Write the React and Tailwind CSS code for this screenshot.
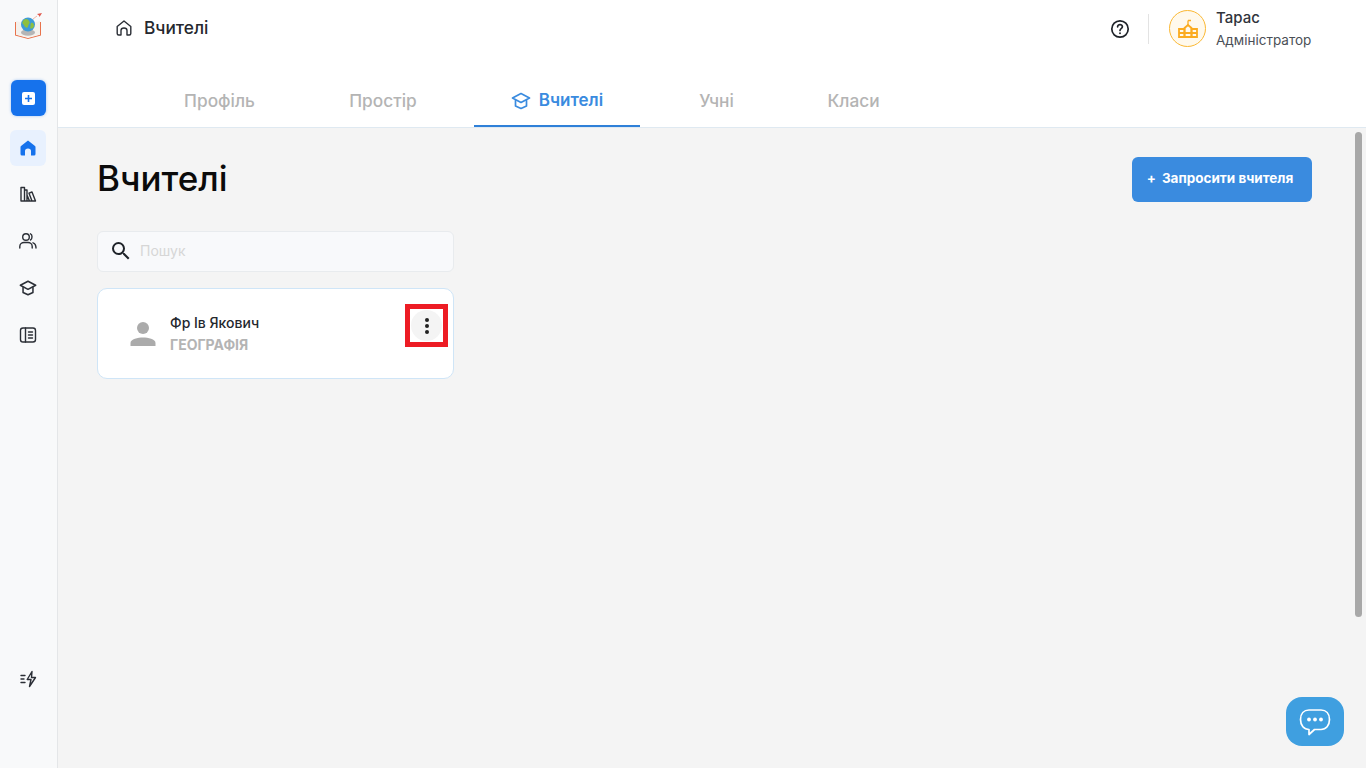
import React from "react";

const font = { fontFamily: "Inter, sans-serif" };

function Logo() {
  return (
    <svg width="28" height="28" viewBox="0 0 28 28" fill="none">
      <path d="M1 9 L1 22.5 L14 26 L27 22.5 L27 9 L26 9 L26 21.8 L14 25 L2 21.8 L2 9 Z" fill="#e8734c" />
      <path d="M2 8 L14 11 L26 8 L26 21.5 L14 24.5 L2 21.5 Z" fill="#f4f1ec" />
      <ellipse cx="14" cy="19.5" rx="7" ry="3.2" fill="#b5b5b5" />
      <circle cx="14" cy="11.5" r="7" fill="#3e9bd8" />
      <path d="M9 8 C11 5 14 6 15 8 C17 10 14 11 14 14 C12 16 10 13 10 12 C8 11 8 9 9 8 Z M17 10 C19 9 20 11 20 13 C19 16 17 16 16 15 C17 13 16 11 17 10 Z" fill="#8ebf3f" />
      <path d="M23 1 L28 0 L25.5 4 L25 2.5 Z" fill="#e0574a" />
      <path d="M19 6 L23 3" stroke="#f2b8a8" strokeWidth="1" />
    </svg>
  );
}

function NavIcon({ children, size = 20 }) {
  return (
    <svg width={size} height={size} viewBox="0 0 20 20" fill="none" stroke="#2b2f36" strokeWidth="1.4" strokeLinecap="round" strokeLinejoin="round">
      {children}
    </svg>
  );
}

function CapIcon({ color = "#2b2f36", size = 20 }) {
  return (
    <svg width={size} height={size} viewBox="0 0 20 20" fill="none" stroke={color} strokeWidth="1.7" strokeLinecap="round" strokeLinejoin="round">
      <path d="M10 2.5 L18.5 7 L10 11.5 L1.5 7 Z" />
      <path d="M4.5 9.5 V15 L10 17.5 L15.5 15 V9.5" />
    </svg>
  );
}

function Sidebar() {
  return (
    <aside className="w-[58px] h-full shrink-0 bg-[#f8f9fa] border-r border-[#e4e6e8] flex flex-col items-center pr-[1px]">
      <div className="mt-[13px] h-[28px]">
        <Logo />
      </div>
      <button className="mt-[39px] ml-[1px] w-[35px] h-[36px] rounded-[6px] bg-[#1672ec] flex items-center justify-center shadow-[0_0_3px_rgba(22,114,236,0.4)]">
        <span className="w-[13px] h-[13px] rounded-[2px] bg-white flex items-center justify-center">
          <svg width="9" height="9" viewBox="0 0 9 9"><path d="M4.5 1 V8 M1 4.5 H8" stroke="#1672ec" strokeWidth="1.6" /></svg>
        </span>
      </button>
      <div className="mt-[14px] w-[36px] h-[36px] rounded-[6px] bg-[#e8f1fe] flex items-center justify-center">
        <svg width="18" height="18" viewBox="0 0 18 18">
          <path fillRule="evenodd" d="M9 1.5 L16 7 Q16.5 7.5 16.5 8.2 V15 Q16.5 16.5 15 16.5 H12 V12 Q12 9.5 9 9.5 Q6 9.5 6 12 V16.5 H3 Q1.5 16.5 1.5 15 V8.2 Q1.5 7.5 2 7 Z" fill="#1672ec" />
        </svg>
      </div>
      <div className="mt-[18px] flex flex-col items-center gap-[27px]">
        <NavIcon>
          <path d="M3 17 V3.5 H6.5 V17 M6.5 17 V6 H9 V17 M3 17 H17.5 L14 8 L11 9.2 L14 17 M9 11 L11.5 17" />
        </NavIcon>
        <NavIcon>
          <circle cx="8" cy="6" r="3.3" />
          <path d="M1.8 17 V15.5 C1.8 13 4 11.5 6 11.5 H10 C12 11.5 14.2 13 14.2 15.5 V17" />
          <path d="M12.5 2.8 C14.5 3.5 14.5 8 12.5 9 M15 11.8 C17 12.5 18 14 18 17" />
        </NavIcon>
        <div className="w-[20px] h-[20px] flex items-center justify-center">
          <CapIcon size={18} />
        </div>
        <NavIcon>
          <rect x="2.5" y="3" width="15" height="14" rx="2.5" />
          <path d="M7.5 3 V17 M10.5 7 H14.5 M10.5 10 H14.5 M10.5 13 H14.5" />
        </NavIcon>
      </div>
      <div className="mt-auto mb-[79px] ml-[1px]">
        <NavIcon>
          <path d="M2 6.5 H6 M2 10 H5 M2 13.5 H6" />
          <path d="M13 2.5 L8.2 10.5 H12 L10.5 17.5 L16.5 8.5 H12.5 Z" />
        </NavIcon>
      </div>
    </aside>
  );
}

function Header() {
  const tabs = [
    { label: "Профіль", w: "w-[163px]" },
    { label: "Простір", w: "w-[173px] pr-[9px]" },
    { label: "Вчителі", w: "w-[166px]", active: true },
    { label: "Учні", w: "w-[153px]" },
    { label: "Класи", w: "w-[121px]" },
  ];
  return (
    <header className="h-[128px] shrink-0 bg-white border-b border-[#dfe9f1] flex flex-col">
      <div className="h-[58px] flex items-start justify-between pl-[57px] pr-[54px]">
        <div className="flex items-center gap-[11px] mt-[18px]">
          <svg width="18" height="18" viewBox="0 0 18 18" fill="none" stroke="#2b2f36" strokeWidth="1.4" strokeLinejoin="round">
            <path d="M9 2 L15.8 7.5 V14.5 Q15.8 16 14.3 16 H12 V11.5 Q12 9 9 9 Q6 9 6 11.5 V16 H3.7 Q2.2 16 2.2 14.5 V7.5 Z" />
          </svg>
          <span className="text-[17.3px] leading-[20px] font-medium text-[#25282e]">Вчителі</span>
        </div>
        <div className="flex items-center mt-[8px]">
          <svg width="20" height="20" viewBox="0 0 20 20" fill="none" stroke="#1f2329" strokeWidth="1.7" strokeLinecap="round">
            <circle cx="10" cy="10" r="8.2" />
            <path d="M7.6 7.8 C7.6 5 12.4 5 12.4 7.8 C12.4 9.6 10 9.6 10 11.4" />
            <path d="M10 14.2 V14.3" strokeWidth="1.9" />
          </svg>
          <div className="w-px h-[30px] bg-[#e3e3e3] ml-[18px] mr-[20px]" />
          <div className="w-[37px] h-[37px] rounded-full bg-[#fff9ec] border border-[#fbb833] flex items-center justify-center">
            <svg width="22" height="22" viewBox="0 0 22 22" fill="none" stroke="#fbab1f" strokeWidth="1.8">
              <path d="M11 7 V2.5 M11 2.5 H14" strokeWidth="1.3" />
              <path d="M7.5 10 L11 7 L14.5 10 V19 H7.5 Z" />
              <path d="M2 11 H7.5 V19 H2 Z M14.5 11 H20 V19 H14.5 Z M2 15 H20" />
            </svg>
          </div>
          <div className="ml-[10px] w-[96px]">
            <div className="text-[15px] leading-[20px] font-medium text-[#30343b]">Тарас</div>
            <div className="mt-[3px] text-[13.5px] leading-[18px] text-[#4b4f56]">Адміністратор</div>
          </div>
        </div>
      </div>
      <nav className="mt-auto flex pl-[80px]">
        {tabs.map((t) => (
          <div
            key={t.label}
            className={`${t.w} h-[53px] flex items-center justify-center gap-[8px] pt-[3px] font-medium ${
              t.active
                ? "text-[17px] text-[#3a8bdf] border-b-2 border-[#2f80d8] font-semibold"
                : "text-[17.3px] text-[#b4b4b4] border-b-2 border-transparent"
            }`}
          >
            {t.active && <CapIcon color="#3a8bdf" size={20} />}
            {t.label}
          </div>
        ))}
      </nav>
    </header>
  );
}

function TeacherCard() {
  return (
    <div className="relative mt-[16px] w-[357px] h-[91px] bg-white border border-[#cfe5f7] rounded-[10px] flex items-start">
      <svg className="ml-[31px] mt-[31px]" width="28" height="28" viewBox="0 0 28 28" fill="#ababab">
        <circle cx="14" cy="8" r="6" />
        <path d="M1.5 26 V23 C1.5 19 9 17.5 14 17.5 C19 17.5 26.5 19 26.5 23 V26 Z" />
      </svg>
      <div className="ml-[13px] mt-[24px]">
        <div className="text-[14px] leading-[20px] font-medium text-[#25282e]">Фр Ів Якович</div>
        <div className="mt-[2px] text-[14px] leading-[20px] font-bold text-[#b4b4b4]">ГЕОГРАФІЯ</div>
      </div>
      <div className="absolute left-[307px] top-[15px] w-[43px] h-[43px] border-[5px] border-[#ed1c24] flex items-center justify-center">
        <div className="w-[31px] h-[31px] rounded-full bg-[#f4f4f4] flex flex-col items-center justify-center gap-[2px]">
          <span className="w-[4px] h-[4px] rounded-full bg-[#222]" />
          <span className="w-[4px] h-[4px] rounded-full bg-[#222]" />
          <span className="w-[4px] h-[4px] rounded-full bg-[#222]" />
        </div>
      </div>
    </div>
  );
}

export default function App() {
  return (
    <div style={font} className="relative w-[1366px] h-[768px] overflow-hidden flex bg-[#f4f4f4]">
      <Sidebar />
      <div className="flex-1 flex flex-col min-w-0">
        <Header />
        <main className="relative flex-1 pl-[39px] pr-[54px]">
          <div className="flex items-start justify-between pt-[28px]">
            <h1 className="text-[35px] leading-[44px] font-medium text-[#0b0b0b]">Вчителі</h1>
            <button className="mt-[1px] w-[180px] h-[45px] pb-[2px] pr-[4px] rounded-[6px] bg-[#3a8bdf] text-white text-[13.5px] font-bold flex items-center justify-center gap-[6px]">
              <span>+</span>
              <span>Запросити вчителя</span>
            </button>
          </div>
          <div className="mt-[29px] w-[357px] h-[41px] rounded-[6px] bg-[#f8f9fb] border border-[#e8ebee] flex items-center pl-[11px] pb-[1px]">
            <svg width="24" height="24" viewBox="0 0 24 24" fill="#1f2329">
              <path d="M15.5 14h-.79l-.28-.27A6.471 6.471 0 0 0 16 9.5 6.5 6.5 0 1 0 9.5 16c1.61 0 3.09-.59 4.23-1.57l.27.28v.79l5 4.99L20.49 19l-4.99-5zm-6 0C7.01 14 5 11.99 5 9.5S7.01 5 9.5 5 14 7.01 14 9.5 11.99 14 9.5 14z" />
            </svg>
            <span className="ml-[7px] pb-[1px] text-[14px] text-[#d6d6d6]">Пошук</span>
          </div>
          <TeacherCard />
          <div className="absolute right-[4px] top-[4px] w-[7px] h-[485px] rounded-full bg-[#a8a8a8]" />
        </main>
      </div>
      <button className="absolute left-[1286px] top-[697px] w-[58px] h-[49px] rounded-[16px] bg-[#3f9fe0] flex items-center justify-center">
        <svg width="32" height="28" viewBox="0 0 32 28" fill="none">
          <path d="M10 2 H22 C27 2 30.5 5.5 30.5 11.5 C30.5 17.5 27 21.5 22 21.5 H15.5 L10 26.5 V21.5 C5 21.5 1.5 17.5 1.5 11.5 C1.5 5.5 5 2 10 2 Z" stroke="white" strokeWidth="1.7" strokeLinejoin="round" />
          <circle cx="10" cy="11.5" r="1.9" fill="white" />
          <circle cx="16" cy="11.5" r="1.9" fill="white" />
          <circle cx="22" cy="11.5" r="1.9" fill="white" />
        </svg>
      </button>
    </div>
  );
}
